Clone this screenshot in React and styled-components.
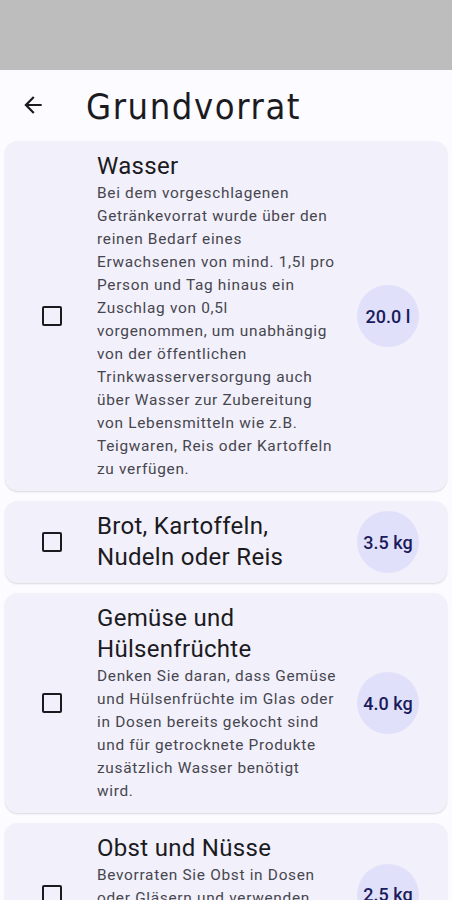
import React, { useState } from 'react'
import styled, { createGlobalStyle } from 'styled-components'

const items = [
  {
    title: 'Wasser',
    amount: '20.0 l',
    text: 'Bei dem vorgeschlagenen Getränkevorrat wurde über den reinen Bedarf eines Erwachsenen von mind. 1,5l pro Person und Tag hinaus ein Zuschlag von 0,5l vorgenommen, um unabhängig von der öffentlichen Trinkwasserversorgung auch über Wasser zur Zubereitung von Lebensmitteln wie z.B. Teigwaren, Reis oder Kartoffeln zu verfügen.'
  },
  {
    title: 'Brot, Kartoffeln, Nudeln oder Reis',
    amount: '3.5 kg'
  },
  {
    title: 'Gemüse und Hülsenfrüchte',
    amount: '4.0 kg',
    text: 'Denken Sie daran, dass Gemüse und Hülsenfrüchte im Glas oder in Dosen bereits gekocht sind und für getrocknete Produkte zusätzlich Wasser benötigt wird.'
  },
  {
    title: 'Obst und Nüsse',
    amount: '2.5 kg',
    text: 'Bevorraten Sie Obst in Dosen oder Gläsern und verwenden Trockenfrüchte und Nüsse als haltbare Ergänzung.'
  }
]

const BackIcon = () => (
  <svg width='26' height='26' viewBox='0 0 24 24' fill='#1b1b1f'>
    <path d='M20 11H7.83l5.59-5.59L12 4l-8 8 8 8 1.41-1.41L7.83 13H20v-2z' />
  </svg>
)

const SupplyCard = ({ title, amount, text }) => {
  const [checked, setChecked] = useState(false)

  return (
    <Card>
      <CheckArea>
        <Checkbox checked={checked} onClick={() => setChecked(!checked)} />
      </CheckArea>
      <Body>
        <Title>{title}</Title>
        {text ? <Description>{text}</Description> : null}
      </Body>
      <Badge>{amount}</Badge>
    </Card>
  )
}

const App = () => (
  <>
    <GlobalStyle />
    <StatusBar />
    <Header>
      <BackButton><BackIcon /></BackButton>
      <PageTitle>Grundvorrat</PageTitle>
    </Header>
    <List>
      {items.map(item => (
        <SupplyCard key={item.title} {...item} />
      ))}
    </List>
  </>
)

const GlobalStyle = createGlobalStyle`
  body {
    margin: 0;
    background: #fcfbff;
    font-family: Roboto, "Liberation Sans", sans-serif;
    color: #1b1b1f;
  }
`

const StatusBar = styled.div`
  height: 70px;
  background: #bdbdbd;
`

const Header = styled.div`
  height: 70px;
  display: flex;
  align-items: center;
`

const BackButton = styled.button`
  width: 66px;
  height: 48px;
  padding: 0;
  border: none;
  background: none;
  display: flex;
  align-items: center;
  justify-content: center;
`

const PageTitle = styled.h1`
  margin: 3px 0 0 20px;
  font-family: "DejaVu Sans Condensed", "DejaVu Sans", sans-serif;
  font-weight: 400;
  font-size: 36px;
  letter-spacing: 1.6px;
  color: #1b1b1f;
`

const List = styled.div`
  display: flex;
  flex-direction: column;
  gap: 10px;
  padding: 1px 5px 0;
`

const Card = styled.div`
  display: grid;
  grid-template-columns: 92px 1fr 62px;
  align-items: center;
  padding: 10px 28px 10px 0;
  background: #f2f0fa;
  border-radius: 13px;
  box-shadow: 0 1px 2px rgba(0, 0, 0, 0.14);
`

const CheckArea = styled.div`
  display: flex;
  padding-left: 37px;
`

const Checkbox = styled.span`
  box-sizing: border-box;
  width: 20px;
  height: 20px;
  border: 2.2px solid #1b1b1f;
  border-radius: 2px;
  background: ${p => (p.checked ? '#1b1b1f' : 'transparent')};
  cursor: pointer;
`

const Body = styled.div`
  display: flex;
  flex-direction: column;
  margin-right: 17px;
`

const Title = styled.div`
  font-size: 24px;
  line-height: 31px;
  letter-spacing: 0.3px;
  color: #1b1b1f;
`

const Description = styled.div`
  font-size: 15.4px;
  line-height: 23px;
  letter-spacing: 0.7px;
  color: #46464f;
`

const Badge = styled.div`
  width: 62px;
  height: 62px;
  border-radius: 50%;
  background: #e1e0fa;
  display: flex;
  align-items: center;
  justify-content: center;
  font-size: 18px;
  font-weight: 500;
  color: #1a1b5a;
  white-space: nowrap;
`

export default App
